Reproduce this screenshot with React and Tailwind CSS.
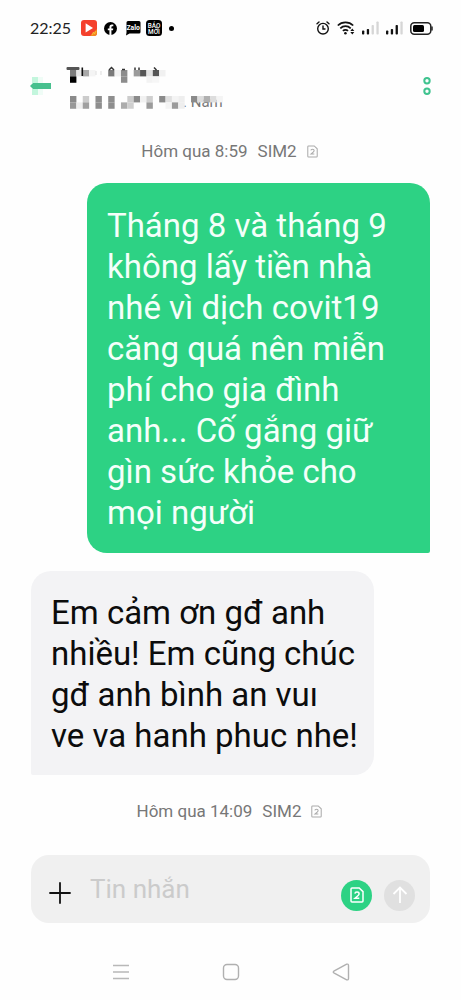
import { useState } from 'react'

const messages = [
  {
    id: 1,
    own: true,
    text: 'Tháng 8 và tháng 9\nkhông lấy tiền nhà\nnhé vì dịch covit19\ncăng quá nên miễn\nphí cho gia đình\nanh... Cố gắng giữ\ngìn sức khỏe cho\nmọi người',
  },
  {
    id: 2,
    own: false,
    text: 'Em cảm ơn gđ anh\nnhiều! Em cũng chúc\ngđ anh bình an vuı\nve va hanh phuc nhe!',
  },
]

// [column, row, color] of the 6px blocks that hide the contact
const nameBlocks = [
  [0, 0, '#7c7c7c'], [0, 1, '#000000'], [1, 0, '#e6e6e6'], [2, 0, '#a9a9a9'],
  [3, 0, '#f4f4f4'], [6, 0, '#7a7a7a'], [7, 0, '#f1f1f1'], [8, 0, '#8c8c8c'],
  [8, 1, '#8c8c8c'], [10, 0, '#9b9b9b'], [11, 0, '#555555'], [12, 0, '#e2e2e2'],
  [13, 0, '#555555'], [12, 1, '#f3f3f3'], [13, 1, '#f6f6f6'], [14, 0, '#f1f1f1'],
]

const placeBlocks = [
  [0, 0, '#8a8a8a'], [0, 1, '#989898'], [1, 1, '#eeeeee'], [2, 0, '#cccccc'],
  [2, 1, '#a0a0a0'], [4, 0, '#8e8e8e'], [4, 1, '#8e8e8e'], [6, 0, '#8e8e8e'],
  [6, 1, '#8e8e8e'], [8, 1, '#acacac'], [9, 0, '#cccccc'], [9, 1, '#cfcfcf'],
  [10, 0, '#8a8a8a'], [11, 0, '#f1f1f1'], [12, 0, '#cfcfcf'], [12, 1, '#9b9b9b'],
  [14, 0, '#8a8a8a'], [15, 0, '#e0e0e0'], [15, 1, '#f4f4f4'], [16, 0, '#f4f4f4'],
  [16, 1, '#9b9b9b'], [17, 0, '#eeeeee'], [17, 1, '#eeeeee'], [19, 0, '#8a8a8a'],
  [20, 0, '#dddddd'], [21, 0, '#b0b0b0'], [22, 0, '#dddddd'], [23, 0, '#f4f4f4'],
]

function Blocks({ blocks }) {
  return blocks.map(([col, row, color]) => (
    <rect key={`${col}-${row}`} x={4 + col * 6.37} y={4 + row * 6.37} width="6.4" height="6.4" fill={color} />
  ))
}

function SimIcon({ className, strokeWidth = 1.5 }) {
  return (
    <svg viewBox="0 0 14 16" className={className} fill="none" aria-hidden="true">
      <path d="M2 1h7.2L13 4.6V14a1 1 0 0 1-1 1H2a1 1 0 0 1-1-1V2a1 1 0 0 1 1-1z" stroke="currentColor" strokeWidth={strokeWidth} />
      <path d="M4.9 6.6c.1-1 .9-1.6 2.1-1.6 1.3 0 2.1.7 2.1 1.7 0 .8-.4 1.3-1.2 2L5 11.3h4.3" stroke="currentColor" strokeWidth={strokeWidth} />
    </svg>
  )
}

function Signal({ level }) {
  return (
    <svg viewBox="0 0 17 14" className="h-[14px] w-[17px]" aria-hidden="true">
      {[0, 1, 2, 3].map((i) => (
        <rect
          key={i}
          x={i * 4.8}
          y={[9.5, 8, 4, 0.5][i]}
          width="2.3"
          height={[4, 5.5, 9.5, 13][i]}
          rx="0.8"
          fill={i < level ? '#111' : '#d6d6d6'}
        />
      ))}
    </svg>
  )
}

function StatusBar() {
  return (
    <div className="flex h-14 items-center justify-between pr-7 pl-[30px]">
      <div className="flex items-center">
        <span className="font-[Lato,sans-serif] text-[16px] leading-5 text-[#222]">22:25</span>
        <svg viewBox="0 0 16 16" className="ml-2.5 size-4" aria-hidden="true">
          <rect width="16" height="16" rx="3" fill="#f4402c" />
          <path d="M16 9v4a3 3 0 0 1-3 3H9z" fill="#f28a1e" />
          <path d="M4.6 3.3v9.2L12 7.9z" fill="#fff" />
          <path d="M11 15l1.5-3 1 2 1.5-3" stroke="#f7c23c" strokeWidth="0.8" fill="none" />
        </svg>
        <svg viewBox="0 0 24 24" className="ml-[7px] size-[13px]" aria-hidden="true">
          <circle cx="12" cy="12" r="12" fill="#000" />
          <path d="M10 24v-8.6H7v-3.5h3V9.3c0-3 1.8-4.7 4.5-4.7 1.3 0 2.7.2 2.7.2v3h-1.5c-1.5 0-2 .9-2 1.9v2.2h3.4l-.5 3.5h-2.9V24z" fill="#fff" />
        </svg>
        <svg viewBox="0 0 16 16" className="ml-2 size-4" aria-hidden="true">
          <path d="M3 1h11a1.5 1.5 0 0 1 1.5 1.5V12a1.5 1.5 0 0 1-1.5 1.5H4.500L1 15.500l.5-3V2.500A1.5 1.5 0 0 1 3 1z" fill="#000" />
          <text x="8.2" y="9.8" textAnchor="middle" fontSize="6.8" fontWeight="700" fontFamily="Roboto, sans-serif" fill="#fff">Zalo</text>
        </svg>
        <svg viewBox="0 0 16 16" className="ml-[5px] size-4" aria-hidden="true">
          <rect width="16" height="16" rx="3.5" fill="#000" />
          <text x="8" y="7.7" textAnchor="middle" fontSize="6.4" fontWeight="500" fontFamily="Roboto, sans-serif" fill="#fff">BÁO</text>
          <text x="8" y="14" textAnchor="middle" fontSize="6.4" fontWeight="500" fontFamily="Roboto, sans-serif" fill="#fff">MỚI</text>
        </svg>
        <span className="ml-[7px] size-[5px] rounded-full bg-black" />
      </div>

      <div className="flex items-center gap-[7px]">
        <svg viewBox="0 0 14 14" className="size-[14px]" fill="none" stroke="#111" strokeWidth="1.4" strokeLinecap="round" aria-hidden="true">
          <circle cx="7" cy="7.7" r="5.3" />
          <path d="M7 5v3h2M1 2.800 3 1M13 2.800 11 1" />
        </svg>
        <svg viewBox="0 0 18 14" className="h-[14px] w-[18px]" fill="none" stroke="#111" strokeWidth="1.7" aria-hidden="true">
          <path d="M.8 4.500C5 .2 12 .2 16.200 4.500M3.300 7.300c3-3 7.400-3 10.400 0M5.900 9.900c1.500-1.500 3.700-1.500 5.100 0" />
          <circle cx="8.4" cy="12.2" r="1.3" fill="#111" stroke="none" />
          <path d="M13.300 9.900 15.300 7.500l2 2.400zM13.300 11l2 2.400 2-2.400z" fill="#111" stroke="none" />
        </svg>
        <Signal level={2} />
        <Signal level={3} />
        <svg viewBox="0 0 23 13" className="h-[13px] w-[23px]" fill="none" aria-hidden="true">
          <rect x="0.8" y="0.8" width="20" height="11.4" rx="3.5" stroke="#222" strokeWidth="1.5" />
          <rect x="3" y="3" width="11" height="7" rx="1.5" fill="#000" />
          <path d="M22 4.500v4" stroke="#222" strokeWidth="1.5" />
        </svg>
      </div>
    </div>
  )
}

function Header() {
  return (
    <header className="flex h-[60px] items-center pr-[29px] pl-[30px]">
      <button type="button" aria-label="Back">
        <svg viewBox="0 0 22 20" className="h-5 w-[22px]" aria-hidden="true">
          <path d="M2 1h6v6H2zM2 13h6v6H2z" fill="#c3f6dd" />
          <path d="M8 1h5v6H8zM8 13h5v6H8z" fill="#effcf6" />
          <path d="M3 7h18v6H3L0 10z" fill="#47c08e" />
        </svg>
      </button>
      <div className="ml-3.5 flex-1 pt-1.5">
        <svg viewBox="0 0 110 24" className="h-6 w-[110px]" aria-hidden="true">
          <rect x="0.5" y="1" width="13" height="3" rx="1" fill="#555" />
          <Blocks blocks={nameBlocks} />
          <path d="M15.500 1.500h1.600V10h-1.600z" fill="#111" />
          <path d="M30 5v4M35 5v4" stroke="#ddd" />
          <path d="M43 4l2.500-2.500L48 4M56 3.500h3M69 1.500V4M73 1.500V4M88 1.500l2.500 2.500" stroke="#333" strokeWidth="1.5" fill="none" />
        </svg>
        <div className="relative mt-0.5 flex h-5 items-center pl-[117px]">
          <span className="text-[15px] leading-5 text-[#777]">. Nam</span>
          <svg viewBox="0 0 160 20" className="absolute top-0 left-0 h-5 w-40" aria-hidden="true">
            <Blocks blocks={placeBlocks} />
          </svg>
        </div>
      </div>
      <button type="button" aria-label="More options">
        <svg viewBox="0 0 10 20" className="h-5 w-2.5" fill="none" stroke="#3fc38f" strokeWidth="2" aria-hidden="true">
          <circle cx="5" cy="4.7" r="2.7" />
          <circle cx="5" cy="15.2" r="2.7" />
        </svg>
      </button>
    </header>
  )
}

function Timestamp({ time }) {
  return (
    <div className="flex items-center justify-center text-[17px] leading-5 text-[#777]">
      <span>Hôm qua {time}</span>
      <span className="ml-2.5">SIM2</span>
      <SimIcon className="mr-0.5 ml-2.5 h-[13px] w-[11px] text-[#aaa]" strokeWidth={1.3} />
    </div>
  )
}

function Bubble({ message }) {
  const side = message.own
    ? 'ml-14 rounded-br-xs bg-[#2dd284] pt-[22px] pb-5 text-[#f4fffa]'
    : 'mr-14 rounded-bl-xs bg-[#f3f3f5] pt-[21px] pb-[19px] text-[#0c0c0c]'
  return (
    <div className={`rounded-[20px] pr-2 pl-5 text-[33px] leading-[41px] whitespace-pre-line ${side}`}>
      {message.text}
    </div>
  )
}

function Composer() {
  const [text, setText] = useState('')

  return (
    <form
      onSubmit={(e) => e.preventDefault()}
      className="flex h-[68px] items-center rounded-[18px] bg-[#f0f0f0] pr-[15px] pl-[18px]"
    >
      <button type="button" aria-label="Add attachment" className="mt-2">
        <svg viewBox="0 0 22 22" className="size-[22px]" stroke="#111" strokeWidth="1.8" strokeLinecap="round" aria-hidden="true">
          <path d="M11 1v20M1 11h20" />
        </svg>
      </button>
      <input
        type="text"
        value={text}
        onChange={(e) => setText(e.target.value)}
        placeholder="Tin nhắn"
        aria-label="Tin nhắn"
        className="ml-[19px] h-10 min-w-0 flex-1 bg-transparent text-[26px] leading-10 outline-none placeholder:text-[#cbcbcb]"
      />
      <button type="button" aria-label="SIM 2" className="mt-3 flex size-[31px] items-center justify-center rounded-full bg-[#2dd284]">
        <SimIcon className="h-4 w-3.5 text-white" />
      </button>
      <button type="submit" aria-label="Send" className="mt-3 ml-3 flex size-[31px] items-center justify-center rounded-full bg-[#e0e0e0]">
        <svg viewBox="0 0 16 18" className="h-[18px] w-4" fill="none" stroke="#fff" strokeWidth="1.8" aria-hidden="true">
          <path d="M8 17V1.800M1.500 8 8 1.500 14.500 8" />
        </svg>
      </button>
    </form>
  )
}

function NavBar() {
  return (
    <nav className="flex items-center justify-center gap-[92px] pt-10">
      <button type="button" aria-label="Recent apps">
        <svg viewBox="0 0 18 18" className="size-[18px]" stroke="#b8b8b8" strokeWidth="1.3" aria-hidden="true">
          <path d="M1 2.500h16M1 9h16M1 15.500h16" />
        </svg>
      </button>
      <button type="button" aria-label="Home">
        <svg viewBox="0 0 18 18" className="size-[18px]" fill="none" stroke="#b0b0b0" strokeWidth="1.4" aria-hidden="true">
          <rect x="1.5" y="1.5" width="15" height="15" rx="3.5" />
        </svg>
      </button>
      <button type="button" aria-label="Back">
        <svg viewBox="0 0 18 18" className="size-[18px]" fill="none" stroke="#b0b0b0" strokeWidth="1.4" strokeLinejoin="round" aria-hidden="true">
          <path d="M1.800 8.200 14.700 1.200q1.800-.5 1.800 1.200v13.200q0 1.700-1.800 1.200L1.800 9.800q-1.100-.8 0-1.600z" />
        </svg>
      </button>
    </nav>
  )
}

export default function App() {
  return (
    <div className="min-h-screen bg-[#fefefe] font-[Roboto,sans-serif]">
      <StatusBar />
      <Header />
      <main className="px-[31px]">
        <div className="pt-[25px] pb-[22px]">
          <Timestamp time="8:59" />
        </div>
        <div className="space-y-[18px]">
          {messages.map((message) => (
            <Bubble key={message.id} message={message} />
          ))}
        </div>
        <div className="pt-[26px] pb-[34px]">
          <Timestamp time="14:09" />
        </div>
        <Composer />
      </main>
      <NavBar />
    </div>
  )
}
